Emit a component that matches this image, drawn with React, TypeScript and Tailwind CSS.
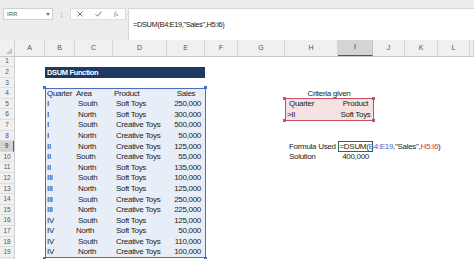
import React from "react";

type Row = [string, string, string, string, boolean];

const data: Row[] = [
  ["I", "South", "Soft Toys", "250,000", false],
  ["I", "North", "Soft Toys", "300,000", false],
  ["I", "South", "Creative Toys", "500,000", false],
  ["I", "North", "Creative Toys", "50,000", false],
  ["II", "North", "Creative Toys", "125,000", false],
  ["II", "South", "Creative Toys", "55,000", true],
  ["II", "North", "Soft Toys", "135,000", false],
  ["III", "South", "Soft Toys", "100,000", false],
  ["III", "North", "Soft Toys", "125,000", false],
  ["III", "South", "Creative Toys", "250,000", false],
  ["III", "North", "Creative Toys", "225,000", false],
  ["IV", "South", "Soft Toys", "125,000", false],
  ["IV", "North", "Soft Toys", "50,000", true],
  ["IV", "South", "Creative Toys", "110,000", false],
  ["IV", "North", "Creative Toys", "100,000", false],
];

const letters = ["A", "B", "C", "D", "E", "F", "G", "H", "I", "J", "K", "L", ""];

function Handles({ color }: { color: string }) {
  return (
    <>
      <div className="absolute -left-[2px] -top-[2px] w-[3px] h-[3px]" style={{ background: color }} />
      <div className="absolute -right-[2px] -top-[2px] w-[3px] h-[3px]" style={{ background: color }} />
      <div className="absolute -left-[2px] -bottom-[2px] w-[3px] h-[3px]" style={{ background: color }} />
      <div className="absolute -right-[2px] -bottom-[2px] w-[3px] h-[3px]" style={{ background: color }} />
    </>
  );
}

export default function App() {
  return (
    <div className="w-[474px] h-[259px] overflow-hidden bg-white font-['Liberation_Sans',Arial,sans-serif] text-[#1c1c1c] flex flex-col">
      {/* Toolbar / formula bar */}
      <div className="h-[40px] shrink-0 bg-[#ececec] flex items-start pt-[8px] pl-[3px]">
        <div className="w-[50px] h-[12px] bg-white border border-[#d0d0d0] flex items-center justify-between pl-[3px] pr-[2px]">
          <span className="text-[6px] leading-none text-[#555]">IRR</span>
          <svg width="4" height="3" viewBox="0 0 4 3">
            <path d="M0 0h4L2 3z" fill="#777" />
          </svg>
        </div>
        <div className="w-[17px] h-[12px] flex flex-col items-center justify-center gap-[1px]">
          <div className="w-[1px] h-[1px] bg-[#aaa]" />
          <div className="w-[1px] h-[1px] bg-[#aaa]" />
          <div className="w-[1px] h-[1px] bg-[#aaa]" />
        </div>
        <div className="w-[56px] h-[12px] bg-white border border-[#dcdcdc] flex items-center pl-[6px] gap-[12px]">
          <svg width="6" height="6" viewBox="0 0 6 6">
            <path d="M0.5 0.5L5.5 5.5M5.5 0.5L0.5 5.5" stroke="#666" strokeWidth="0.9" />
          </svg>
          <svg width="7" height="6" viewBox="0 0 7 6">
            <path d="M0.5 3.2L2.5 5.2L6.5 0.6" stroke="#666" strokeWidth="0.9" fill="none" />
          </svg>
          <span className="text-[7px] leading-none italic text-[#666] font-['Liberation_Serif',serif]">
            f<span className="text-[5px]">x</span>
          </span>
        </div>
        <div className="ml-[2px] flex-1 h-[32px] bg-white border-l border-t border-[#d6d6d6] pl-[4px] pt-[1px]">
          <span className="text-[7.5px] leading-[10px] tracking-[-0.4px] text-[#222]">
            =DSUM(B4:E19,"Sales",H5:I6)
          </span>
        </div>
      </div>

      {/* Column headers */}
      <div className="h-[16.5px] shrink-0 flex bg-[#f0f0f0] border-b border-[#c8c8c8]">
        <div className="w-[15px] shrink-0 border-r border-[#cfcfcf] flex items-end justify-end pr-[2px] pb-[2px]">
          <svg width="6" height="6" viewBox="0 0 6 6">
            <path d="M6 0V6H0z" fill="#c4c4c4" />
          </svg>
        </div>
        <div className="flex-1 grid grid-cols-[30px_30px_38px_54px_38px_33px_47px_53px_35px_32px_33px_32px_1fr]">
          {letters.map((l, i) =>
            l === "I" ? (
              <div
                key={i}
                className="flex items-center justify-center text-[7px] text-[#333] bg-[#d4d4d4] border-r border-[#c4c4c4] border-b-[1.5px] border-b-[#217346]"
              >
                {l}
              </div>
            ) : (
              <div
                key={i}
                className="flex items-center justify-center text-[7px] text-[#555] border-r border-[#d6d6d6]"
              >
                {l}
              </div>
            )
          )}
        </div>
      </div>

      {/* Body */}
      <div className="flex flex-1">
        {/* Row headers */}
        <div className="w-[15px] shrink-0 flex flex-col bg-[#f0f0f0] border-r border-[#cfcfcf]">
          {Array.from({ length: 20 }, (_, i) => i + 1).map((n) =>
            n === 9 ? (
              <div
                key={n}
                className="h-[10.6px] shrink-0 flex items-center justify-center text-[6.5px] text-[#333] bg-[#d4d4d4] border-b border-[#d8d8d8] border-r-[1.5px] border-r-[#217346]"
              >
                {n}
              </div>
            ) : (
              <div
                key={n}
                className="h-[10.6px] shrink-0 flex items-center justify-center text-[6.5px] text-[#555] border-b border-[#dedede]"
              >
                {n < 20 ? n : ""}
              </div>
            )
          )}
        </div>

        {/* Sheet grid */}
        <div className="flex-1 grid grid-cols-[30px_30px_38px_54px_38px_33px_47px_53px_35px_32px_33px_32px_1fr] grid-rows-[repeat(20,10.6px)] text-[8px] tracking-[-0.3px]">
          {/* DSUM Function bar */}
          <div className="[grid-area:2/2/3/6] bg-[#1f3a62] flex items-center pl-[2px]">
            <span className="text-white font-bold text-[7.5px] tracking-[-0.35px] leading-none">DSUM Function</span>
          </div>

          {/* Data table */}
          <div className="[grid-area:4/2/20/6] relative bg-[#e8eef8] flex flex-col">
            <div className="h-[10.6px] shrink-0 grid grid-cols-[30px_38px_54px_38px] items-center leading-none">
              <span className="pl-[2px]">Quarter</span>
              <span className="pl-[1px]">Area</span>
              <span className="pl-[1px]">Product</span>
              <span className="text-center">Sales</span>
            </div>
            {data.map(([q, a, p, s, shifted], i) => (
              <div key={i} className="h-[10.6px] shrink-0 grid grid-cols-[30px_38px_54px_38px] items-center leading-none">
                <span className="pl-[2px]">{q}</span>
                {shifted ? <span className="pl-[1px]">{a}</span> : <span className="pl-[3px]">{a}</span>}
                <span className="pl-[3px] whitespace-nowrap">{p}</span>
                <span className="text-right pr-[4px]">{s}</span>
              </div>
            ))}
            <div className="absolute -inset-[0.5px] border border-[#4a6fc1] pointer-events-none" />
            <Handles color="#4a6fc1" />
          </div>

          {/* Criteria */}
          <div className="[grid-area:4/8/5/10] flex items-center justify-center leading-none">Criteria given</div>
          <div className="[grid-area:5/8/7/10] relative bg-[#f6e2e3] flex flex-col">
            <div className="h-[10.6px] grid grid-cols-[53px_35px] items-center leading-none">
              <span className="pl-[4px]">Quarter</span>
              <span className="text-center">Product</span>
            </div>
            <div className="h-[10.6px] grid grid-cols-[53px_35px] items-center leading-none">
              <span className="pl-[2px]">&gt;II</span>
              <span className="text-center whitespace-nowrap">Soft Toys</span>
            </div>
            <div className="absolute -inset-[0.5px] border border-[#c4505f] pointer-events-none" />
            <Handles color="#c4505f" />
          </div>

          {/* Formula used */}
          <div className="[grid-area:9/8/10/9] flex items-center pl-[4px] leading-none whitespace-nowrap">Formula Used</div>
          <div className="[grid-area:9/9/10/10] border-[1.5px] border-[#217346] flex items-center leading-none whitespace-nowrap pl-[0.5px]">
            <span>=DSUM(</span>
            <span className="text-[#3b68c6]">B4:E19</span>
            <span>,"Sales",</span>
            <span className="text-[#c43a4c]">H5:I6</span>
            <span>)</span>
            <span className="ml-[1px] w-[1px] h-[8px] bg-[#222]" />
          </div>

          {/* Solution */}
          <div className="[grid-area:10/8/11/9] flex items-center pl-[4px] leading-none">Solution</div>
          <div className="[grid-area:10/9/11/10] flex items-center justify-end pr-[4px] leading-none">400,000</div>
        </div>
      </div>
    </div>
  );
}
